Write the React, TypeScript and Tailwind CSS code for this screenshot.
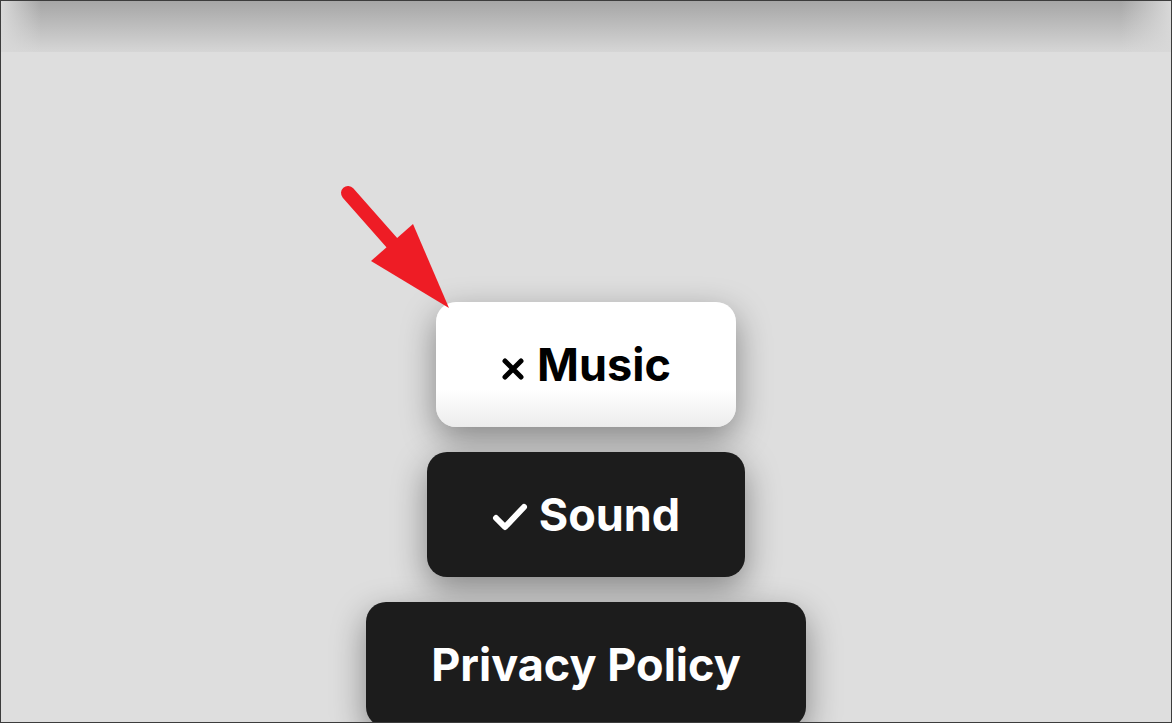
import React from 'react'

function Arrow() {
  return (
    <svg className="absolute left-[330px] top-[175px]" width="130" height="140" viewBox="0 0 130 140">
      <line x1="17" y1="17" x2="62" y2="68" stroke="#ee1c25" strokeWidth="14" strokeLinecap="round" />
      <polygon points="40,85 82,48 118,132" fill="#ee1c25" />
    </svg>
  )
}

function Cross() {
  return (
    <svg width="24" height="24" viewBox="0 0 24 24" className="mt-[8px]">
      <path d="M4 4 L20 20 M20 4 L4 20" stroke="#000" strokeWidth="5" strokeLinecap="round" />
    </svg>
  )
}

function Check() {
  return (
    <svg width="36" height="30" viewBox="0 0 36 30" className="mt-[4px]">
      <path d="M4 16 L13 25 L32 5" stroke="#fff" strokeWidth="6" fill="none" strokeLinecap="round" strokeLinejoin="round" />
    </svg>
  )
}

export default function App() {
  return (
    <div className="relative w-[1172px] h-[723px] overflow-hidden bg-[#dedede] border border-[#3c3c3c] font-['Inter',sans-serif]">
      {/* header shadow */}
      <div className="relative h-[51px] bg-gradient-to-b from-[#a6a6a6] to-[#d6d6d6]">
        <div className="absolute left-0 top-0 h-full w-[40px] bg-gradient-to-r from-[#d8d8d8] to-transparent" />
        <div className="absolute right-0 top-0 h-full w-[50px] bg-gradient-to-l from-[#d8d8d8] to-transparent" />
      </div>

      <div className="flex flex-col items-center gap-[25px] pt-[250px]">
        <div className="flex items-center justify-center gap-[12px] w-[300px] h-[125px] rounded-[20px] bg-gradient-to-b from-white from-70% to-[#ececec] shadow-[0_12px_34px_rgba(0,0,0,0.4)]">
          <Cross />
          <span className="text-[45px] font-bold text-black">Music</span>
        </div>
        <div className="flex items-center justify-center gap-[11px] w-[318px] h-[125px] rounded-[20px] bg-[#1c1c1c] shadow-[0_12px_34px_rgba(0,0,0,0.4)]">
          <Check />
          <span className="text-[45px] font-bold text-white">Sound</span>
        </div>
        <div className="flex items-center justify-center w-[440px] h-[125px] rounded-[20px] bg-[#1c1c1c] shadow-[0_12px_34px_rgba(0,0,0,0.4)]">
          <span className="text-[45px] font-bold text-white">Privacy Policy</span>
        </div>
      </div>

      <Arrow />
    </div>
  )
}
